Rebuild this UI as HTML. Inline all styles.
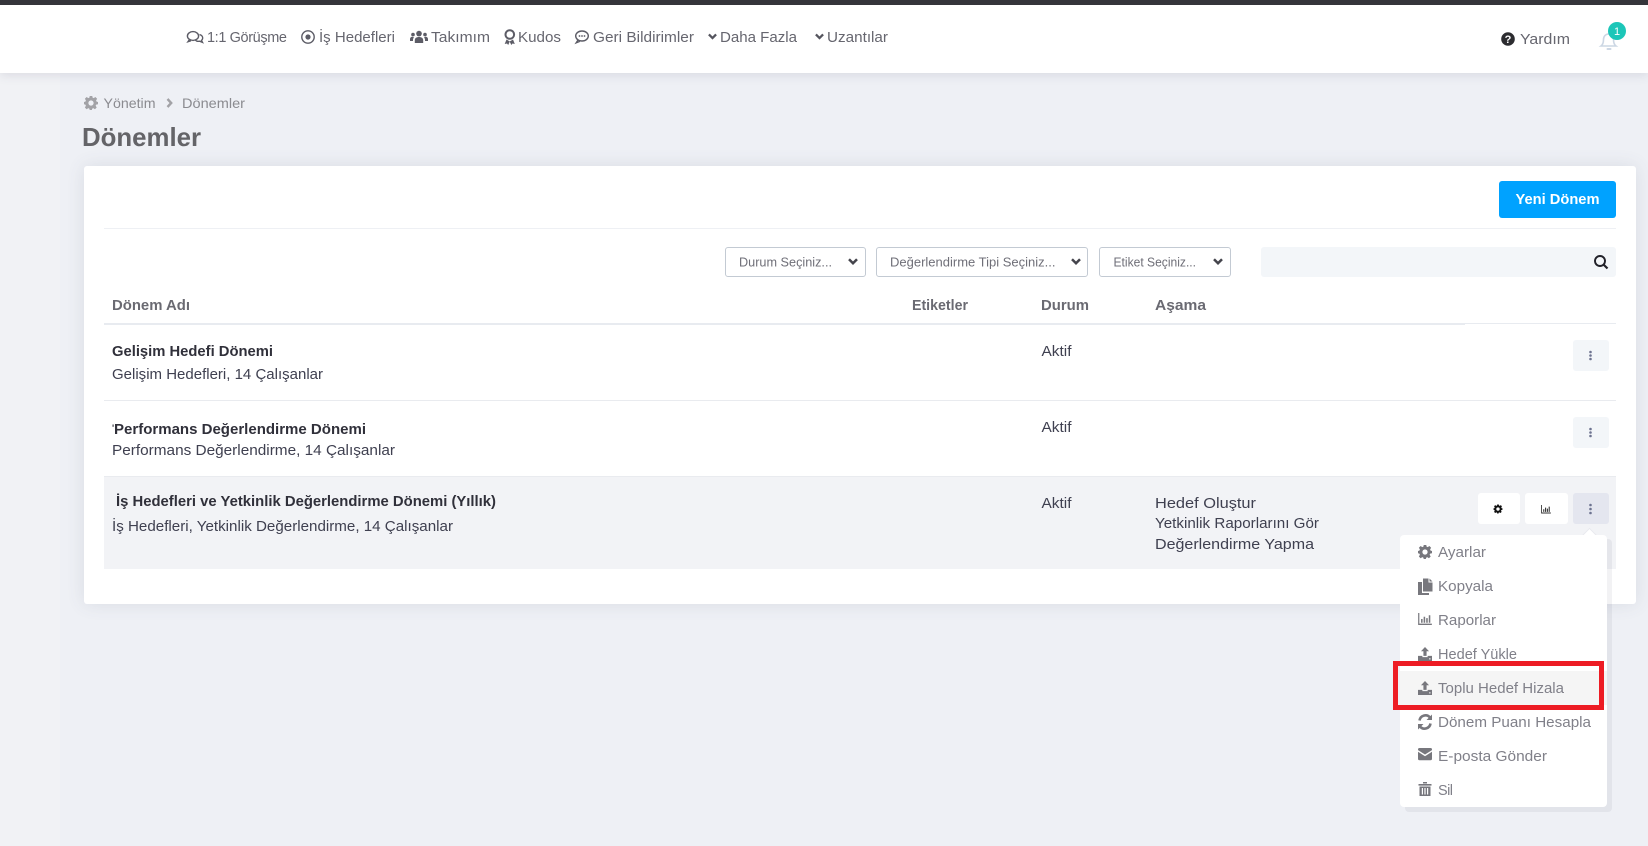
<!DOCTYPE html>
<html lang="tr">
<head>
<meta charset="utf-8">
<title>Dönemler</title>
<style>
html,body{margin:0;padding:0;width:1648px;height:846px;overflow:hidden;background:#eef0f5;}
.a{position:absolute;box-sizing:border-box;}
svg.o{position:absolute;left:0;top:0;}
text{font-family:"Liberation Sans",sans-serif;}
.nav{font-size:14.5px;fill:#66666f;}
.td{font-size:14.5px;fill:#3f4050;}
.b{font-size:14.5px;font-weight:bold;fill:#30303a;}
.th{font-size:14.5px;font-weight:bold;fill:#6a6a72;}
.m{font-size:14.5px;fill:#808089;}
.s{font-size:12.5px;fill:#6f6f78;}
.sel{background:#fff;border:1px solid #c3cad3;border-radius:3px;top:247px;height:30px;}
</style>
</head>
<body>
<div class="a" style="left:0;top:0;width:60px;height:846px;background:#f1f2f5"></div>
<div class="a" style="left:0;top:0;width:1648px;height:73px;background:#fff;box-shadow:0 2px 10px rgba(60,65,90,.13)"></div>
<div class="a" style="left:0;top:0;width:1648px;height:5px;background:#35353b"></div>

<div class="a" style="left:84px;top:166px;width:1552px;height:438px;background:#fff;border-radius:3px;box-shadow:0 0 18px rgba(70,80,110,.12)"></div>
<div class="a" style="left:104px;top:228px;width:1512px;height:1px;background:#eef0f4"></div>
<div class="a" style="left:1499px;top:181px;width:117px;height:37px;background:#00a2ff;border-radius:3px"></div>
<div class="a sel" style="left:725px;width:141px"></div>
<div class="a sel" style="left:876px;width:212px"></div>
<div class="a sel" style="left:1099px;width:132px"></div>
<div class="a" style="left:1261px;top:247px;width:355px;height:30px;background:#f3f6f9;border-radius:3px"></div>

<div class="a" style="left:104px;top:323px;width:1361px;height:2px;background:#e8ebf0"></div>
<div class="a" style="left:1465px;top:323px;width:151px;height:1px;background:#e8ebf0"></div>
<div class="a" style="left:104px;top:400px;width:1512px;height:1px;background:#e9ebef"></div>
<div class="a" style="left:104px;top:476px;width:1512px;height:93px;background:#f2f3f6;border-top:1px solid #e9ebef"></div>

<div class="a" style="left:1573px;top:340px;width:36px;height:31px;background:#f3f6f9;border-radius:3px"></div>
<div class="a" style="left:1573px;top:417px;width:36px;height:31px;background:#f3f6f9;border-radius:3px"></div>
<div class="a" style="left:1478px;top:493px;width:42px;height:31px;background:#fff;border-radius:3px"></div>
<div class="a" style="left:1525px;top:493px;width:43px;height:31px;background:#fff;border-radius:3px"></div>
<div class="a" style="left:1573px;top:493px;width:36px;height:31px;background:#e4e6ef;border-radius:3px"></div>

<div class="a" style="left:1405px;top:539px;width:207px;height:273px;background:rgba(70,75,95,.07);border-radius:4px"></div>
<div class="a" style="left:1584px;top:530px;width:11px;height:11px;background:#fff;transform:rotate(45deg);border-left:1px solid #e8e9ee;border-top:1px solid #e8e9ee"></div>
<div class="a" style="left:1400px;top:535px;width:207px;height:272px;background:#fff;border-radius:4px"></div>
<div class="a" style="left:1400px;top:671px;width:207px;height:34px;background:#f5f5f5"></div>
<div class="a" style="left:1393px;top:661px;width:211px;height:49px;border:5px solid #ed1c24"></div>

<svg class="o" width="1648" height="846" viewBox="0 0 1648 846" xmlns="http://www.w3.org/2000/svg">
<defs>
<symbol id="gear" viewBox="0 0 16 16">
<path d="M6.6 0h2.8l.4 2.2 1.3.6 1.9-1.2 2 2-1.2 1.9.6 1.3L16 7.2v2.6l-2.1.5-.6 1.3 1.2 1.9-2 2-1.9-1.2-1.3.6-.4 2.1H6.6l-.4-2.1-1.3-.6L3 15.5l-2-2 1.2-1.9-.6-1.3L0 9.8V7.2l1.6-.4.6-1.3L1 3.6l2-2 1.9 1.2 1.3-.6zM8 5.4a3 3 0 1 0 0 6 3 3 0 0 0 0-6z" fill-rule="evenodd" transform="translate(0 -.4)"/>
</symbol>
<symbol id="up" viewBox="0 0 16 16">
<path d="M8 0l4.6 4.8H9.8v5.4H6.2V4.8H3.4zM0 10.2h5v1.3h6v-1.3h5V16H0zM12.6 13v1.2h1.8V13z" fill-rule="evenodd"/>
</symbol>
<symbol id="chev" viewBox="0 0 10 7">
<path d="M1 1.2l4 4 4-4" fill="none" stroke="currentColor" stroke-width="2.500"/>
</symbol>
<symbol id="chart" viewBox="0 0 16 14">
<path d="M0 0h1.4v12.4H16V14H0zM3.4 7h1.8v4.4H3.4zM6.4 4.4h1.8v7H6.4zM9.4 6h1.8v5.4H9.4zM12.4 2.6h1.8v8.8h-1.8z"/>
</symbol>
</defs>

<!-- nav icons -->
<g fill="none" stroke="#5c5c66" stroke-width="1.4">
<ellipse cx="193" cy="36" rx="5.6" ry="4.4"/>
<path d="M189.5 39.5l-1.5 2.2 3-1"/>
<path d="M199.5 34.5c2 .6 3.2 2 3.2 3.5 0 1-.4 1.8-1.2 2.4l1 2-2.8-1.2c-1.6.3-3.2 0-4.2-1"/>
<circle cx="308" cy="37" r="6.2"/>
</g>
<circle cx="308" cy="37" r="2.6" fill="#5c5c66"/>
<g fill="#5c5c66">
<circle cx="419" cy="33.6" r="2.800"/><circle cx="413" cy="34.6" r="1.800"/><circle cx="425" cy="34.600" r="1.800"/>
<path d="M414.800 43v-2.600c0-2.400 1.700-3.400 4.200-3.400s4.200 1 4.200 3.400V43zM410 41v-1.800c0-1.500 1-2.400 2.400-2.400l1.600.4c-.7.8-1 1.800-1 2.800v1zM428 41v-1.800c0-1.500-1-2.400-2.400-2.400l-1.600.4c.7.800 1 1.800 1 2.800v1z"/>
<path d="M506.500 39.500l-1.800 4.500 2.300-.5 1.200 1.500 1.600-3.500zM513 39.500l1.800 4.500-2.300-.5-1.200 1.500-1.600-3.500z"/>
</g>
<circle cx="509.800" cy="34.500" r="4.300" fill="none" stroke="#5c5c66" stroke-width="2"/>
<g fill="none" stroke="#5c5c66" stroke-width="1.400">
<ellipse cx="582" cy="36" rx="6.300" ry="5"/>
<path d="M578 40l-1.800 2.800 3.600-1.400"/>
</g>
<g fill="#5c5c66"><circle cx="579.500" cy="36" r=".9"/><circle cx="582" cy="36" r=".9"/><circle cx="584.500" cy="36" r=".9"/></g>
<use href="#chev" x="708" y="33" width="9" height="7" color="#55555e"/>
<use href="#chev" x="815" y="33" width="9" height="7" color="#55555e"/>

<!-- nav text -->
<text class="nav" x="207" y="42" textLength="80" lengthAdjust="spacing">1:1 Görüşme</text>
<text class="nav" x="319" y="42" textLength="76" lengthAdjust="spacingAndGlyphs">İş Hedefleri</text>
<text class="nav" x="431" y="42" textLength="59" lengthAdjust="spacingAndGlyphs">Takımım</text>
<text class="nav" x="518" y="42" textLength="43" lengthAdjust="spacingAndGlyphs">Kudos</text>
<text class="nav" x="593" y="42" textLength="101" lengthAdjust="spacingAndGlyphs">Geri Bildirimler</text>
<text class="nav" x="720" y="42" textLength="77" lengthAdjust="spacingAndGlyphs">Daha Fazla</text>
<text class="nav" x="827" y="42" textLength="61" lengthAdjust="spacingAndGlyphs">Uzantılar</text>

<!-- help + bell -->
<circle cx="1508" cy="39" r="6.800" fill="#2c2c30"/>
<text x="1508" y="43" text-anchor="middle" style="font-size:11px;font-weight:bold;fill:#fff">?</text>
<text class="nav" x="1520" y="44" textLength="50" lengthAdjust="spacingAndGlyphs">Yardım</text>
<path d="M1601 46c2-1.500 2.500-3.500 2.500-6.500 0-3 2-5.500 5-5.500s5 2.500 5 5.500c0 3 .5 5 2.500 6.500z" fill="none" stroke="#ccd7e4" stroke-width="1.600"/>
<rect x="1606.500" y="48" width="5" height="2" rx="1" fill="#ccd7e4"/>
<circle cx="1617" cy="31" r="9" fill="#1cc6b8"/>
<text x="1617" y="35" text-anchor="middle" style="font-size:11px;fill:#fff">1</text>

<!-- breadcrumb -->
<use href="#gear" x="84" y="96" width="14" height="14" fill="#a2a2a6"/>
<text x="103.500" y="108" textLength="52" lengthAdjust="spacingAndGlyphs" style="font-size:14px;fill:#8b8b90">Yönetim</text>
<path d="M167.500 99l3.700 4-3.700 4" fill="none" stroke="#a2a2a6" stroke-width="2.400"/>
<text x="182" y="108" textLength="63" lengthAdjust="spacingAndGlyphs" style="font-size:14px;fill:#8b8b90">Dönemler</text>
<text x="82" y="146" textLength="119" lengthAdjust="spacingAndGlyphs" style="font-size:26px;font-weight:bold;fill:#646468">Dönemler</text>

<!-- toolbar -->
<text x="1515.500" y="204" textLength="84" lengthAdjust="spacingAndGlyphs" style="font-size:14.500px;font-weight:bold;fill:#fff">Yeni Dönem</text>
<text class="s" x="739" y="266.500" textLength="93" lengthAdjust="spacingAndGlyphs">Durum Seçiniz...</text>
<text class="s" x="890" y="266.500" textLength="165.500" lengthAdjust="spacingAndGlyphs">Değerlendirme Tipi Seçiniz...</text>
<text class="s" x="1113.500" y="266.500" textLength="82.500" lengthAdjust="spacingAndGlyphs">Etiket Seçiniz...</text>
<use href="#chev" x="848" y="258" width="10" height="7" color="#44444c"/>
<use href="#chev" x="1071" y="258" width="10" height="7" color="#44444c"/>
<use href="#chev" x="1213" y="258" width="10" height="7" color="#44444c"/>
<circle cx="1600" cy="261" r="5" fill="none" stroke="#22222a" stroke-width="1.900"/>
<path d="M1603.500 264.500l4 4" stroke="#22222a" stroke-width="2.200"/>

<!-- table head -->
<text class="th" x="112" y="310" textLength="78" lengthAdjust="spacingAndGlyphs">Dönem Adı</text>
<text class="th" x="912" y="310" textLength="56" lengthAdjust="spacingAndGlyphs">Etiketler</text>
<text class="th" x="1041" y="310" textLength="48" lengthAdjust="spacingAndGlyphs">Durum</text>
<text class="th" x="1155" y="310" textLength="51" lengthAdjust="spacingAndGlyphs">Aşama</text>

<!-- rows -->
<text class="b" x="112" y="356" textLength="161" lengthAdjust="spacingAndGlyphs">Gelişim Hedefi Dönemi</text>
<text class="td" x="112" y="379" textLength="211" lengthAdjust="spacingAndGlyphs">Gelişim Hedefleri, 14 Çalışanlar</text>
<text class="td" x="1041.500" y="356" textLength="30" lengthAdjust="spacingAndGlyphs">Aktif</text>

<text x="112" y="431" style="font-size:9px;font-weight:bold;fill:#30303a">'</text>
<text class="b" x="114" y="434" textLength="252" lengthAdjust="spacingAndGlyphs">Performans Değerlendirme Dönemi</text>
<text class="td" x="112" y="455" textLength="283" lengthAdjust="spacingAndGlyphs">Performans Değerlendirme, 14 Çalışanlar</text>
<text class="td" x="1041.500" y="432" textLength="30" lengthAdjust="spacingAndGlyphs">Aktif</text>

<text class="b" x="116" y="506" textLength="380" lengthAdjust="spacingAndGlyphs">İş Hedefleri ve Yetkinlik Değerlendirme Dönemi (Yıllık)</text>
<text class="td" x="112" y="531" textLength="341" lengthAdjust="spacingAndGlyphs">İş Hedefleri, Yetkinlik Değerlendirme, 14 Çalışanlar</text>
<text class="td" x="1041.500" y="508" textLength="30" lengthAdjust="spacingAndGlyphs">Aktif</text>
<text class="td" x="1155" y="508" textLength="101" lengthAdjust="spacingAndGlyphs">Hedef Oluştur</text>
<text class="td" x="1155" y="528" textLength="164" lengthAdjust="spacingAndGlyphs">Yetkinlik Raporlarını Gör</text>
<text class="td" x="1155" y="549" textLength="159" lengthAdjust="spacingAndGlyphs">Değerlendirme Yapma</text>

<!-- row buttons -->
<g fill="#6d7390">
<circle cx="1590.500" cy="352" r="1.300"/><circle cx="1590.500" cy="355.500" r="1.300"/><circle cx="1590.500" cy="359" r="1.300"/>
<circle cx="1590.500" cy="429" r="1.300"/><circle cx="1590.500" cy="432.500" r="1.300"/><circle cx="1590.500" cy="436" r="1.300"/>
<circle cx="1590.500" cy="505" r="1.300"/><circle cx="1590.500" cy="509" r="1.300"/><circle cx="1590.500" cy="513" r="1.300"/>
</g>
<use href="#gear" x="1493.500" y="504.500" width="9" height="9" fill="#111"/>
<use href="#chart" x="1541" y="505" width="10" height="8.500" fill="#333"/>

<!-- dropdown icons -->
<use href="#gear" x="1418" y="545" width="14" height="14" fill="#77777d"/>
<path d="M1423 578.500h5.500v4h4v9h-9.500zM1429.500 578.500l3 3h-3zM1418 582h4v11h7v2h-11z" fill="#77777d"/>
<use href="#chart" x="1418" y="613" width="14" height="12" fill="#77777d"/>
<use href="#up" x="1418" y="647" width="14" height="14" fill="#77777d"/>
<use href="#up" x="1418" y="681" width="14" height="14" fill="#77777d"/>
<g fill="none" stroke="#77777d" stroke-width="2.600">
<path d="M1419.500 720.500a6 6 0 0 1 10.500-3"/>
<path d="M1430.500 723.500a6 6 0 0 1-10.500 3"/>
</g>
<path d="M1432 714.500v5.500h-5.500zM1418 729.500V724h5.500z" fill="#77777d"/>
<path d="M1418 749.500a1.500 1.500 0 0 1 1.500-1.500h11a1.500 1.500 0 0 1 1.500 1.500v.6l-7 4.400-7-4.400zM1418 751.800l7 4.400 7-4.400v7a1.500 1.500 0 0 1-1.500 1.500h-11a1.500 1.500 0 0 1-1.500-1.500z" fill="#77777d"/>
<path d="M1418.500 784h13v1.600h-13zM1423 782h4v1.500h-4zM1419.500 786.500h11v9.500h-11zM1421.800 788v6.500h1.200V788zM1424.400 788v6.500h1.200V788zM1427 788v6.500h1.200V788z" fill="#77777d" fill-rule="evenodd"/>

<!-- dropdown text -->
<text class="m" x="1438" y="557" textLength="48" lengthAdjust="spacingAndGlyphs">Ayarlar</text>
<text class="m" x="1438" y="591" textLength="55" lengthAdjust="spacingAndGlyphs">Kopyala</text>
<text class="m" x="1438" y="625" textLength="58" lengthAdjust="spacingAndGlyphs">Raporlar</text>
<text class="m" x="1438" y="659" textLength="79" lengthAdjust="spacingAndGlyphs">Hedef Yükle</text>
<text class="m" x="1438" y="693" textLength="126" lengthAdjust="spacingAndGlyphs">Toplu Hedef Hizala</text>
<text class="m" x="1438" y="727" textLength="153" lengthAdjust="spacingAndGlyphs">Dönem Puanı Hesapla</text>
<text class="m" x="1438" y="761" textLength="109" lengthAdjust="spacingAndGlyphs">E-posta Gönder</text>
<text class="m" x="1438" y="795" textLength="15" lengthAdjust="spacing">Sil</text>
</svg>
</body>
</html>
